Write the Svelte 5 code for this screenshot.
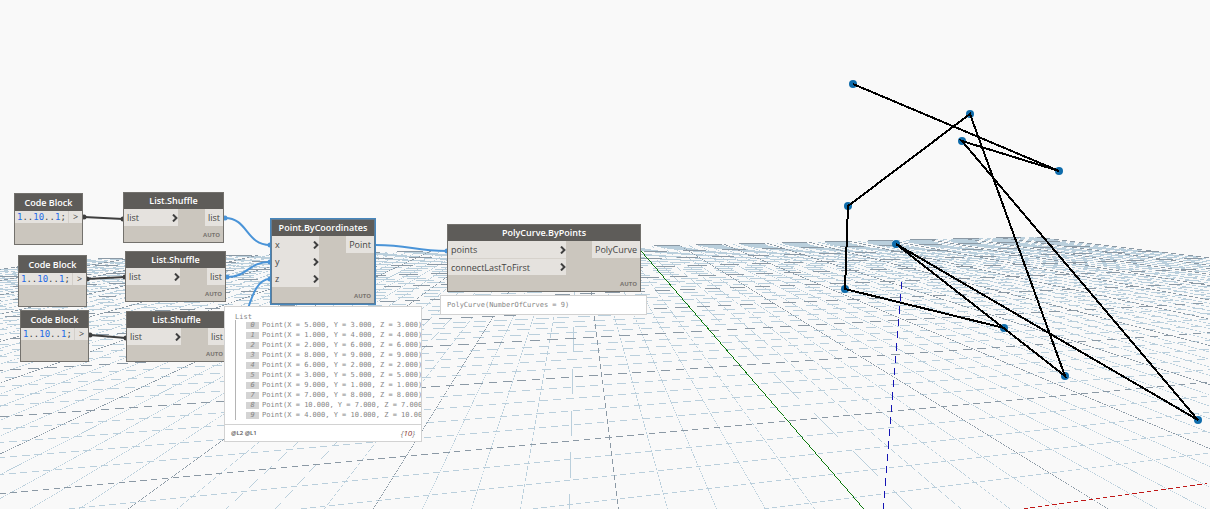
<script>
  // Ground plane in perspective. Both line families vanish on the same horizon.
  const horizon = 182;
  const leftVanish = 577;
  const rightVanish = 3370;
  const gridSize = 50;

  const across = (j) => 7.27 + 0.71 * j;
  const along = (i) => 0.876 + 0.15 * i;

  function project(u, v) {
    const depth = (rightVanish - leftVanish) / (u + v);
    return { x: leftVanish + v * depth, y: horizon + depth };
  }

  // Sliver thinner than a pixel: without antialiasing it breaks up into dashes
  function sliver(x1, y1, x2, y2, size = 0.6) {
    const flat = Math.abs(x2 - x1) > Math.abs(y2 - y1);
    const dx = flat ? 0 : size;
    const dy = flat ? size : 0;
    return `M${x1} ${y1} L${x2} ${y2} L${x2 + dx} ${y2 + dy} L${x1 + dx} ${y1 + dy} Z`;
  }

  const gridLines = [];

  for (let i = -gridSize; i <= gridSize; i++) {
    if (i === 0) continue;
    const v = along(i);
    const far = project(across(gridSize), v);
    gridLines.push({
      d: sliver(far.x, far.y, leftVanish + v * 400, horizon + 400),
      major: i % 5 === 0,
    });
  }

  for (let j = 1; j <= gridSize; j++) {
    const u = across(j);
    const right = project(u, along(gridSize));
    const left = project(u, Math.max(along(-gridSize), 1.2 - u));
    gridLines.push({ d: sliver(left.x, left.y, right.x, right.y), major: j % 5 === 0 });
  }

  // Light lines first so the major ones stay on top
  gridLines.sort((a, b) => a.major - b.major);

  const curvePoints = [
    [853, 84],
    [1059, 171],
    [962, 141],
    [1198, 420],
    [896, 244],
    [1065, 376],
    [970, 114],
    [848, 206],
    [845, 289],
    [1004, 328],
  ];

  const codeBlocks = [
    { x: 14, y: 193 },
    { x: 18, y: 255 },
    { x: 20, y: 310 },
  ];

  const nodes = [
    { title: 'List.Shuffle', x: 123, y: 192, width: 101, inWidth: 54, inputs: ['list'], output: 'list' },
    { title: 'List.Shuffle', x: 125, y: 251, width: 101, inWidth: 54, inputs: ['list'], output: 'list' },
    { title: 'List.Shuffle', x: 126, y: 311, width: 101, inWidth: 54, inputs: ['list'], output: 'list' },
    {
      title: 'Point.ByCoordinates',
      x: 271,
      y: 219,
      width: 104,
      inWidth: 47,
      inputs: ['x', 'y', 'z'],
      output: 'Point',
      selected: true,
    },
    {
      title: 'PolyCurve.ByPoints',
      x: 447,
      y: 224,
      width: 194,
      inWidth: 118,
      inputs: ['points', 'connectLastToFirst'],
      output: 'PolyCurve',
    },
  ];

  const wires = [
    { d: 'M84 217 L123 219', ends: [[84, 217], [123, 219]] },
    { d: 'M87 279 L125 277', ends: [[87, 279], [125, 277]] },
    { d: 'M90 335 L126 338', ends: [[90, 335], [126, 338]] },
    { d: 'M225 218 C248 218 246 245 270 245', ends: [[225, 218], [270, 245]], active: true },
    { d: 'M227 277 C248 277 248 262 270 262', ends: [[227, 277], [270, 262]], active: true },
    { d: 'M227 337 C250 337 246 279 270 279', ends: [[270, 279]], active: true },
    { d: 'M376 245 C410 245 414 251 447 251', ends: [[447, 251]], active: true },
  ];

  const points = [
    ['5.000', '3.000', '3.000'],
    ['1.000', '4.000', '4.000'],
    ['2.000', '6.000', '6.000'],
    ['8.000', '9.000', '9.000'],
    ['6.000', '2.000', '2.000'],
    ['3.000', '5.000', '5.000'],
    ['9.000', '1.000', '1.000'],
    ['7.000', '8.000', '8.000'],
    ['10.000', '7.000', '7.000'],
    ['4.000', '10.000', '10.000'],
  ];
</script>

<main>
  <svg class="layer" aria-hidden="true">
    <g class="grid">
      {#each gridLines as line}
        <path d={line.d} class:major={line.major} />
      {/each}
      <path class="axis-x" d={sliver(1024, 508.4, 1207, 483.2)} />
      <path class="axis-y" d={sliver(638, 248, 872, 519, 1)} />
      <path class="axis-z" d={sliver(901.5, 282, 883, 509)} />
    </g>
    {#each curvePoints as [x, y]}
      <circle class="vertex" cx={x} cy={y} r="4" />
    {/each}
    <polyline class="curve" points={curvePoints.join(' ')} />
  </svg>

  <svg class="layer" aria-hidden="true">
    {#each wires as wire}
      <g class="wire" class:active={wire.active}>
        <path d={wire.d} />
        {#each wire.ends as [x, y]}
          <circle cx={x} cy={y} r="2.5" />
        {/each}
      </g>
    {/each}
  </svg>

  {#each codeBlocks as block}
    <section class="node code-block" style="left: {block.x}px; top: {block.y}px">
      <h2>Code Block</h2>
      <div class="code-row">
        <code><b>1</b>..<b>10</b>..<b>1</b>;</code>
        <span class="code-port">&gt;</span>
      </div>
    </section>
  {/each}

  {#each nodes as node}
    <section
      class="node"
      class:selected={node.selected}
      style="left: {node.x}px; top: {node.y}px; width: {node.width}px"
    >
      <h2>{node.title}</h2>
      <div class="ports">
        <ul style="width: {node.inWidth}px">
          {#each node.inputs as input}
            <li>
              {input}
              <svg class="chevron" viewBox="0 0 6 8" aria-hidden="true">
                <path d="M1 0.6 L4.4 4 L1 7.4" />
              </svg>
            </li>
          {/each}
        </ul>
        <span class="output">{node.output}</span>
      </div>
      <footer>AUTO</footer>
    </section>
  {/each}

  <section class="preview list-preview">
    <div class="tree">
      <span>List</span>
      <ol>
        {#each points as [x, y, z], index}
          <li><i>{index}</i>Point(X = {x}, Y = {y}, Z = {z})</li>
        {/each}
      </ol>
    </div>
    <div class="levels">
      <span>@L2 @L1</span>
      <em>{'{'}<span>10</span>{'}'}</em>
    </div>
  </section>

  <section class="preview curve-preview">PolyCurve(NumberOfCurves = 9)</section>
</main>

<style>
  :global(body) {
    margin: 0;
    background: #f9f9f9;
  }

  main {
    position: relative;
    min-height: 100vh;
    overflow: hidden;
    font-family: 'Open Sans', 'Noto Sans', sans-serif;
    font-size: 9px;
    color: #444;
  }

  .layer {
    position: absolute;
    inset: 0;
    width: 100%;
    height: 100%;
  }

  .grid {
    shape-rendering: crispEdges;
    fill: #bacfdc;
  }

  .major {
    fill: #8b99a5;
  }

  .axis-x {
    fill: #c01818;
  }

  .axis-y {
    fill: #0a780a;
  }

  .axis-z {
    fill: #1414b4;
  }

  .vertex {
    fill: #0f6cab;
  }

  .curve {
    fill: none;
    stroke: #000;
    stroke-width: 2;
    shape-rendering: crispEdges;
  }

  .wire {
    fill: #3f3f3f;
    stroke: #3f3f3f;
  }

  .wire path {
    fill: none;
    stroke-width: 2;
  }

  .wire circle {
    stroke: none;
  }

  .wire.active {
    fill: #4a94d8;
    stroke: #4a94d8;
  }

  .node {
    position: absolute;
    box-sizing: border-box;
    border: 1px solid #73716d;
    background: #cbc6be;
  }

  .node.selected {
    border-color: #5e7c96;
    outline: 1px solid #4787bd;
  }

  h2 {
    margin: 0;
    height: 16px;
    background: #5e5c59;
    color: #fff;
    font-size: 9px;
    font-weight: 600;
    line-height: 16px;
    text-align: center;
    white-space: nowrap;
  }

  .code-block h2 {
    height: 17px;
    line-height: 18px;
  }

  .ports {
    display: flex;
    justify-content: space-between;
    align-items: flex-start;
  }

  ul,
  ol {
    margin: 0;
    padding: 0;
    list-style: none;
  }

  .ports li {
    display: flex;
    align-items: center;
    justify-content: space-between;
    box-sizing: border-box;
    height: 17px;
    padding-left: 3px;
    background: #e5e2de;
    line-height: 17px;
  }

  .ports li + li {
    border-top: 1px solid #d6d2cc;
  }

  .selected .ports li {
    border: 0;
  }

  .chevron {
    width: 6px;
    height: 8px;
    fill: none;
    stroke: #3f3f3f;
    stroke-width: 2;
  }

  .output {
    padding: 0 3px;
    background: #e5e2de;
    line-height: 17px;
  }

  footer {
    height: 16px;
    padding-right: 3px;
    color: #77736e;
    font-size: 6px;
    font-weight: 700;
    line-height: 18px;
    text-align: right;
  }

  .code-block {
    width: 69px;
    height: 52px;
  }

  .code-row {
    display: flex;
    background: #e5e2de;
    line-height: 12px;
  }

  .code-row code {
    flex: 1;
    padding-left: 2px;
    font-family: 'DejaVu Sans Mono', monospace;
    font-size: 9px;
  }

  .code-row b {
    color: #1f6ae6;
    font-weight: 400;
  }

  .code-port {
    width: 13px;
    border-left: 1px solid #d3cfc9;
    text-align: center;
  }

  .preview {
    position: absolute;
    box-sizing: border-box;
    border: 1px solid #d2d2d2;
    background: #fff;
    color: #858585;
    font-family: 'DejaVu Sans Mono', monospace;
    font-size: 7px;
    white-space: nowrap;
  }

  .curve-preview {
    left: 440px;
    top: 295px;
    width: 207px;
    padding: 0 6px;
    line-height: 18px;
  }

  .list-preview {
    left: 224px;
    top: 306px;
    width: 198px;
  }

  .tree {
    padding: 5px 0 4px 10px;
    line-height: 10px;
    overflow: hidden;
  }

  .tree > span {
    display: block;
    height: 8px;
  }

  ol {
    border-left: 1px solid #b4b4b4;
    padding-left: 10px;
  }

  ol li {
    display: flex;
    align-items: center;
    gap: 3px;
    height: 10px;
  }

  ol i {
    flex: none;
    width: 13px;
    height: 7px;
    background: #d4d4d4;
    line-height: 7px;
    text-align: center;
  }

  .levels {
    display: flex;
    justify-content: space-between;
    padding: 0 6px;
    border-top: 1px solid #d2d2d2;
    font-family: 'Open Sans', 'Noto Sans', sans-serif;
    line-height: 16px;
  }

  .levels > span {
    color: #555;
    font-size: 6px;
    font-weight: 600;
  }

  .levels em {
    font-size: 8px;
  }

  .levels em span {
    color: #8a3b33;
  }
</style>
